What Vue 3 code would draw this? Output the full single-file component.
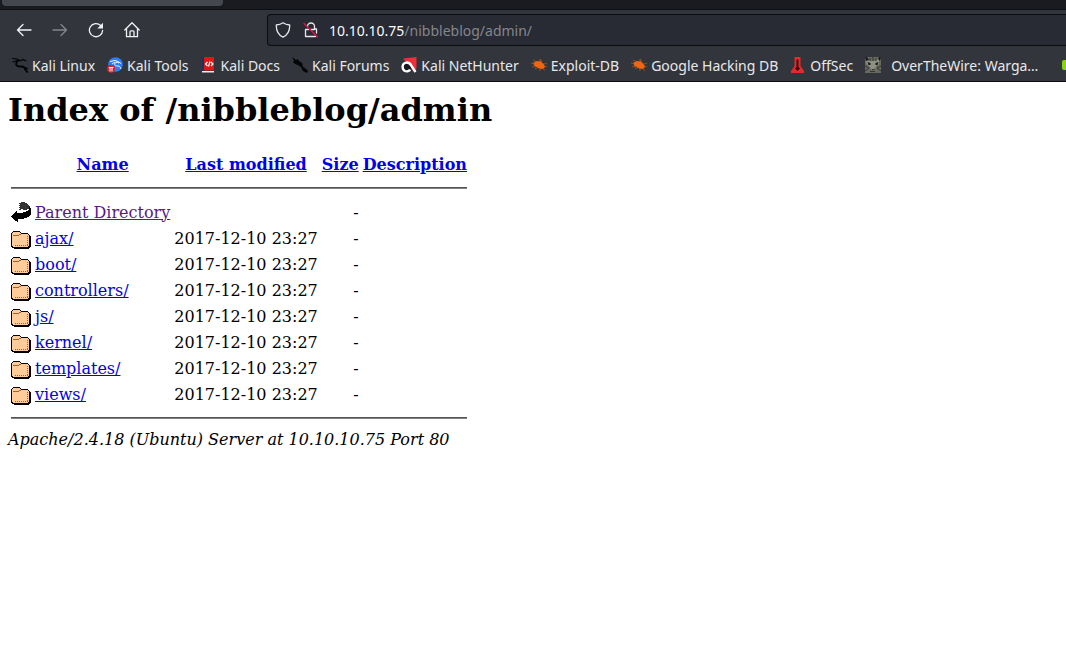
<script setup>
const bookmarks = [
  { label: 'Kali Linux', icon: 'dragon' },
  { label: 'Kali Tools', icon: 'tools' },
  { label: 'Kali Docs', icon: 'docs' },
  { label: 'Kali Forums', icon: 'forums' },
  { label: 'Kali NetHunter', icon: 'nethunter' },
  { label: 'Exploit-DB', icon: 'bug' },
  { label: 'Google Hacking DB', icon: 'bug' },
  { label: 'OffSec', icon: 'offsec' },
  { label: 'OverTheWire: Warga…', icon: 'cat', wide: true },
  { label: '', icon: 'green' },
]
const folders = ['ajax/', 'boot/', 'controllers/', 'js/', 'kernel/', 'templates/', 'views/']
const modified = '2017-12-10 23:27'
</script>

<template>
  <header class="browser">
    <div class="tabs"><div class="tab"></div></div>
    <div class="toolbar">
      <button class="tool" aria-label="Back">
        <svg viewBox="0 0 16 16"><path d="M15 8H1.500M7 2.500 1.500 8 7 13.500" /></svg>
      </button>
      <button class="tool dim" aria-label="Forward" disabled>
        <svg viewBox="0 0 16 16"><path d="M1 8h13.500M9 2.500 14.500 8 9 13.500" /></svg>
      </button>
      <button class="tool" aria-label="Reload">
        <svg viewBox="0 0 16 16"><path d="M12.700 3.500A6.600 6.600 0 1 0 14.600 8.500" /><path class="fill" d="M15 .8v5.700H9.300z" /></svg>
      </button>
      <button class="tool" aria-label="Home">
        <svg viewBox="0 0 16 16"><path d="M.8 8 8 .8 15.200 8M2.500 6.800v7.900h11V6.800M6 14.500V9.800q0-1 1-1h2q1 0 1 1v4.700" /></svg>
      </button>
      <div class="urlbar">
        <svg class="mark" viewBox="0 0 16 16"><path d="M8 .8c2 1.500 4 2 6.700 2.200C14.900 8.500 13 12.800 8 15.200 3 12.800 1.100 8.500 1.300 3 4 2.800 6 2.300 8 .8z" /></svg>
        <svg class="mark" viewBox="0 0 16 16"><path d="M4.500 4.500a3.500 3.500 0 0 1 7 0V7h2v4M2.500 8v6.500h10M2.500 7.500h3M8 7.500h3.500" /><path class="slash" d="M1 1.500l13.500 13.500" /></svg>
        <a class="url" href="#"><span class="host">10.10.10.75</span>/nibbleblog/admin/</a>
      </div>
    </div>
    <nav class="bookmarks">
      <a v-for="b in bookmarks" :key="b.icon + b.label" class="bookmark" :class="{ wide: b.wide }" :aria-label="b.label || 'Bookmark'" href="#">
        <svg viewBox="0 0 16 16">
          <g v-if="b.icon === 'dragon'" fill="none" stroke="#050506" stroke-linecap="round">
            <path stroke-width="1.200" d="M.5 1.500 5 2l3 1.500M1 5l4-1.500 3 .5 3-1.500 3 1.500" />
            <path stroke-width="1.800" d="M5 4.500C2.500 9 6 9.500 9 9.500c3 0 4 1.500 4 3l2.500 2.500M11 10l4 1.500" />
          </g>
          <g v-else-if="b.icon === 'tools'">
            <circle cx="8.500" cy="7.500" r="7.300" fill="#2f7cf6" />
            <path fill="none" stroke="#eef4ff" d="M3 4.500l5-1 3 1 3 2M5 7c2-2 5-2 7-1M8 6c-1 3 1 3 3 3 2 0 2 1 3 3" />
            <circle cx="4" cy="11.800" r="4" fill="#df1c2c" />
            <path stroke="#fff" d="M1.800 10.500h4.600M3 10.500v4M5 10.500v4" />
          </g>
          <g v-else-if="b.icon === 'docs'">
            <path fill="#173265" d="M1 0h3v15H1z" />
            <path fill="#dd1616" d="M3 0h10v13.500H3z" />
            <path fill="#eeeef0" d="M1 14h12v1.500H1z" />
            <path fill="none" stroke="#fff" stroke-width="1.200" d="M6.500 5 4.500 7l2 2M10 5l2 2-2 2M9 4.500 7.500 9.500" />
          </g>
          <path v-else-if="b.icon === 'forums'" fill="#050506" d="M0 0l4 3 2-1 1 2 3 2 1 4 2 1 3 3-1 2-4-2-2-4-3-2-3-1-2-2 1-1z" />
          <g v-else-if="b.icon === 'nethunter'">
            <path fill="#ee2f38" d="M2 1.500 15.500 0v11L13 15z" />
            <path fill="#17191e" d="M0 9l3-4 5-.5 3 3.500-1 5-3 2H3l-3-3z" />
            <path fill="none" stroke="#fff" stroke-width="2.400" d="M14.500 15 10.500 9C9 6 6.500 5 4 6c-3.500 1.500-3 6.500 0 8 2 .8 4.500 0 5-1.500" />
          </g>
          <g v-else-if="b.icon === 'bug'">
            <path fill="#ef6510" d="M2.500 5.500 6 4l4 .5 3 3 1 2.500-2 2-4-.5-5-3z" />
            <path fill="none" stroke="#d45e16" stroke-width=".6" d="M0 6l4 1M2 3l4 2M9 5V2l2 3M1 9.500l4 .5M4 12l4-2M9 14v-3M12 12l2 1.500M12 7l4-.5M13 9l3 1" />
          </g>
          <g v-else-if="b.icon === 'offsec'">
            <path fill="#e52a2a" d="M4.500 0h6v9l3.500 5v2H1v-2l3.500-5z" />
            <path fill="#42080c" d="M6.500 2.500h2V10l1.500 1.500-2.500 2.500L5 11.500 6.500 10z" />
          </g>
          <g v-else-if="b.icon === 'cat'">
            <path fill="#686a60" d="M0 0h16v16H0z" />
            <path fill="#8f9183" d="M1 1l4 3h5l4-3v6l-3 2-1 4H7L4 9 1 6z" />
            <path fill="none" stroke="#34372f" d="M5 1v3M8 0v4M11 1v3M0 9l4 2-4 3M16 9l-4 2 4 3M7 12l1 1 2-1M5 14.500h5" />
            <path fill="#1b1d16" d="M2.500 5l3 1v2h-2zM13.500 5l-3 1v2h2zM0 0h2l2 3-3 1zM16 0h-2l-1 2 2 2z" />
          </g>
          <rect v-else x="0" y="3" width="16" height="10" rx="2" fill="#88d414" />
        </svg>
        <span>{{ b.label }}</span>
      </a>
    </nav>
  </header>

  <main>
    <h1>Index of /nibbleblog/admin</h1>
    <table>
      <thead>
        <tr class="row">
          <th></th>
          <th><a href="#">Name</a></th>
          <th><a href="#">Last modified</a></th>
          <th><a href="#">Size</a></th>
          <th><a href="#">Description</a></th>
        </tr>
        <tr><td colspan="5"><hr /></td></tr>
      </thead>
      <tbody>
        <tr class="row">
          <td class="icon">
            <svg viewBox="0 0 20 22" shape-rendering="crispEdges">
              <path fill="#333" d="M10 1h4v1h2v1h1v1h1v1h1v2h-1v1h-2v1h-4V8h-2v1H8V8h1V7H8V6h1V5H8V4h1V3H8V2h2z" />
              <path fill="#000" d="M18 6h1v1h1v7h-1v1h-1v1h-2v1h-3v1H7v3H6v-1H4v-1H3v-1H2v-1H1v-1H0v-1h1v-1h1v-1h1v-1h1v-1h1v-1h1v2h6v-1h3v-1h2V9h1z" />
            </svg>
          </td>
          <td><a class="visited" href="#">Parent Directory</a></td>
          <td></td>
          <td class="num">-</td>
          <td></td>
        </tr>
        <tr v-for="name in folders" :key="name" class="row">
          <td class="icon">
            <svg viewBox="0 0 20 22" shape-rendering="crispEdges">
              <path fill="#000" d="M2 4h7v1h1v1h7v1h1v1h1v1h1v11h-1v1h-1v1H3v-1H1v-1H0V6h1V5h1z" />
              <path fill="#ffcc99" d="M2 5h7v1h1v1h7v1h1v11h-1v1H2v-1H1V6h1z" />
              <path fill="#996633" d="M2 8h6v1H2zM8 7h2v1H8z" />
              <path fill="none" stroke="#996633" stroke-dasharray="1 1" d="M4 18.500h13M16.500 9v10" />
            </svg>
          </td>
          <td><a href="#">{{ name }}</a></td>
          <td class="num">{{ modified }}</td>
          <td class="num">-</td>
          <td></td>
        </tr>
      </tbody>
      <tfoot>
        <tr><td colspan="5"><hr /></td></tr>
      </tfoot>
    </table>
    <address>Apache/2.4.18 (Ubuntu) Server at 10.10.10.75 Port 80</address>
  </main>
</template>

<style>
body { margin: 0; background: #fff; }
#app { overflow-x: hidden; }
</style>

<style scoped>
.browser {
  background: #33353c;
  border-bottom: 1px solid #0c0c0f;
  font-family: "Noto Sans", sans-serif;
  font-size: 14px;
  color: #e8e8ea;
}
.tabs { height: 9px; background: #1a1b20; border-bottom: 1px solid #0e0e12; }
.tab { width: 221px; height: 6px; margin-left: 2px; background: #45474e; border-radius: 0 0 4px 4px; }
.toolbar { display: flex; align-items: center; height: 40px; padding-left: 6px; }
.tool { width: 36px; height: 32px; padding: 0; border: 0; background: none; color: #f2f2f3; display: flex; align-items: center; justify-content: center; }
.tool svg, .mark { width: 16px; height: 16px; fill: none; stroke: currentColor; stroke-width: 1.3; stroke-linecap: round; stroke-linejoin: round; }
.tool .fill { fill: currentColor; stroke: none; }
.dim { color: #85868b; }
.urlbar {
  flex: 1;
  display: flex;
  align-items: center;
  gap: 12px;
  height: 30px;
  margin-left: 117px;
  padding-left: 7px;
  border: 1px solid #0c0c10;
  border-right: 0;
  border-radius: 4px 0 0 4px;
  background: #282a34;
}
.mark .slash { stroke: #e3174a; }
.url { margin-left: -2px; color: #85868c; text-decoration: none; }
.host { color: #fafafb; }
.bookmarks { display: flex; gap: 12px; height: 30px; padding: 0 0 1px 12px; overflow: hidden; }
.bookmark { display: flex; align-items: center; gap: 4px; flex: none; color: inherit; text-decoration: none; white-space: nowrap; }
.bookmark svg { width: 16px; height: 16px; }
.wide { gap: 10px; margin-right: 12px; }

main { padding: 9px 8px 8px; font-family: "DejaVu Serif", serif; font-size: 16px; color: #000; }
h1 { margin: 0 0 21px; font-size: 32px; line-height: 38px; }
table { border-spacing: 2px; }
td, th { padding: 1px; line-height: 19px; }
.row td, .row th { height: 22px; }
.icon svg { display: block; width: 20px; height: 22px; }
.num { text-align: right; }
a { color: #0000ee; }
.visited { color: #551a8b; }
hr { margin: 8px 0; border: 0; border-top: 1px solid #555; border-bottom: 1px solid #808080; }
address { line-height: 19px; }
</style>
